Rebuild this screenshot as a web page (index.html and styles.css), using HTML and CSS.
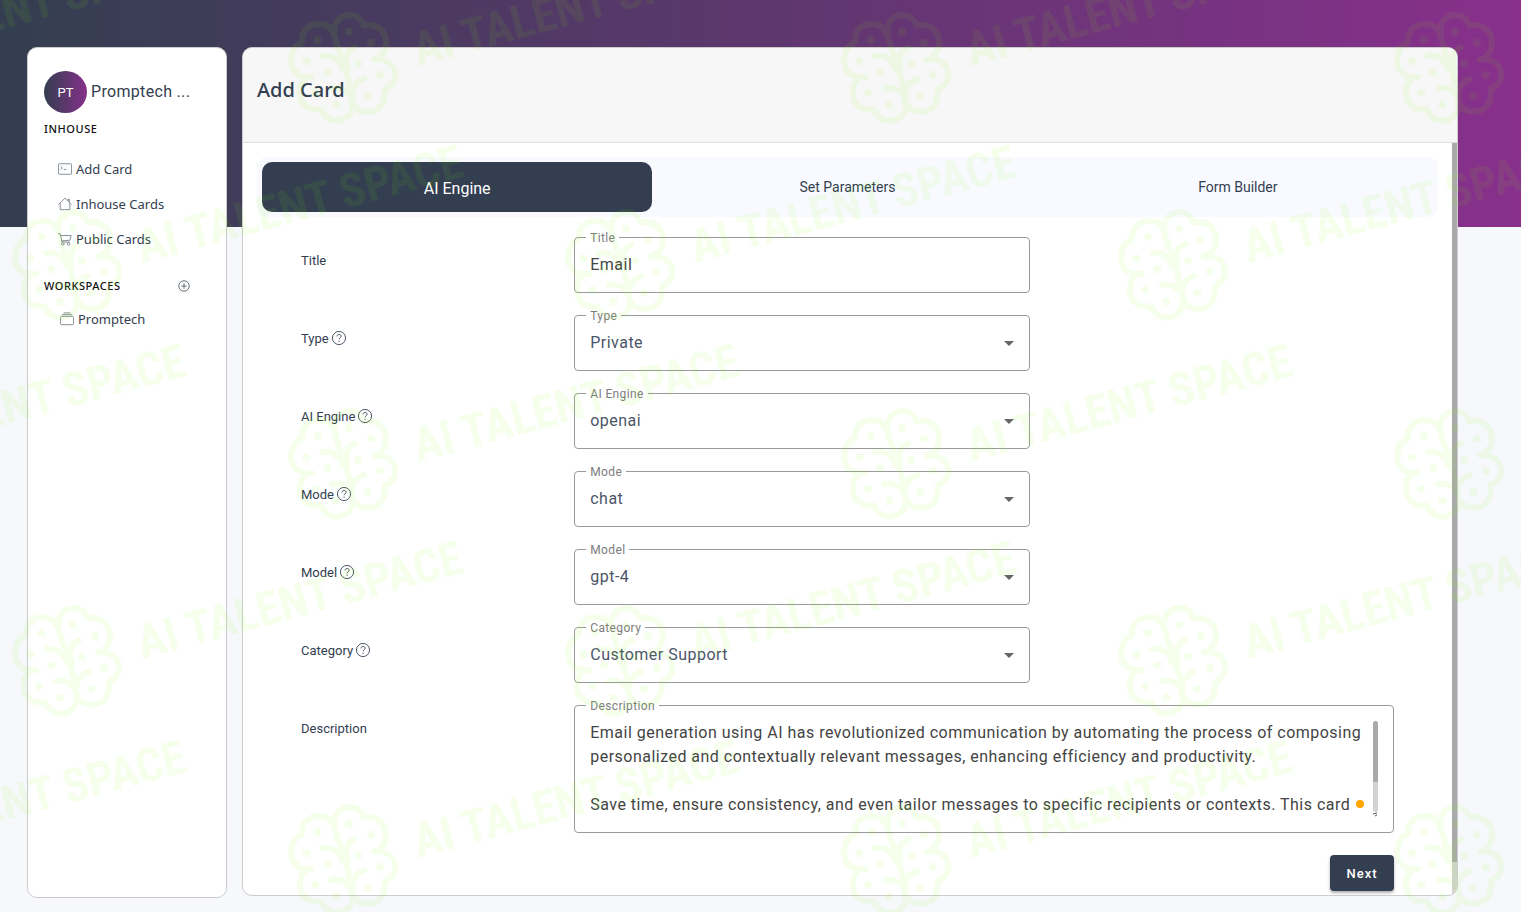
FILE: index.html
```html
<!DOCTYPE html>
<html lang="en">
<head>
  <meta charset="UTF-8">
  <meta name="viewport" content="width=device-width, initial-scale=1">
  <title>Add Card</title>
  <link rel="stylesheet" href="styles.css">
</head>
<body>

  <div class="page">

    <aside class="sidebar">
      <div class="account">
        <span class="avatar">PT</span>
        <span class="account-name">Promptech ...</span>
      </div>

      <h2 class="menu-title">INHOUSE</h2>
      <nav class="menu">
        <a href="#">
          <svg class="icon" viewBox="0 0 16 16"><path d="M1.5 2h13a1 1 0 0 1 1 1v10a1 1 0 0 1-1 1h-13a1 1 0 0 1-1-1V3a1 1 0 0 1 1-1z"/><path d="M3 5l2 1.700L3 8.400M6.500 8.500h3"/></svg>
          Add Card
        </a>
        <a href="#">
          <svg class="icon" viewBox="0 0 16 16"><path d="M.7 8.500L8 1.300l7.300 7.200M2.500 7v7.500h11V7M11.500 4.500v-2h1.500v3.500"/></svg>
          Inhouse Cards
        </a>
        <a href="#">
          <svg class="icon" viewBox="0 0 16 16"><path d="M0 2h2.500l2 9.500h9M3 4h12l-1.500 5.500-9.300.5"/><circle cx="5.500" cy="13.500" r="1.500"/><circle cx="12" cy="13.500" r="1.500"/></svg>
          Public Cards
        </a>
      </nav>

      <div class="menu-head">
        <h2 class="menu-title">WORKSPACES</h2>
        <button class="add-btn" type="button" aria-label="Add workspace">
          <svg class="icon" viewBox="0 0 16 16"><circle cx="8" cy="8" r="7"/><path d="M8 4.500v7M4.500 8h7"/></svg>
        </button>
      </div>
      <nav class="menu workspaces">
        <a href="#">
          <svg class="icon" viewBox="0 0 16 16"><rect x=".5" y="5" width="15" height="9.500" rx="1.500"/><path d="M2 3h12M4 1h8"/></svg>
          Promptech
        </a>
      </nav>
    </aside>

    <main class="card">
      <header class="card-header">
        <h1>Add Card</h1>
      </header>

      <div class="card-body">
        <div class="tabs">
          <button class="tab active" type="button">AI Engine</button>
          <button class="tab" type="button">Set Parameters</button>
          <button class="tab" type="button">Form Builder</button>
        </div>

        <form class="form">
          <div class="row">
            <label class="row-label" for="title">Title</label>
            <div class="field">
              <label for="title">Title</label>
              <input type="text" id="title" value="Email">
            </div>
          </div>

          <div class="row">
            <label class="row-label" for="type">Type <svg class="help" viewBox="0 0 16 16"><use href="#help"/></svg></label>
            <div class="field select">
              <label for="type">Type</label>
              <select id="type"><option>Private</option></select>
            </div>
          </div>

          <div class="row">
            <label class="row-label" for="engine">AI Engine <svg class="help" viewBox="0 0 16 16"><use href="#help"/></svg></label>
            <div class="field select">
              <label for="engine">AI Engine</label>
              <select id="engine"><option>openai</option></select>
            </div>
          </div>

          <div class="row">
            <label class="row-label" for="mode">Mode <svg class="help" viewBox="0 0 16 16"><use href="#help"/></svg></label>
            <div class="field select">
              <label for="mode">Mode</label>
              <select id="mode"><option>chat</option></select>
            </div>
          </div>

          <div class="row">
            <label class="row-label" for="model">Model <svg class="help" viewBox="0 0 16 16"><use href="#help"/></svg></label>
            <div class="field select">
              <label for="model">Model</label>
              <select id="model"><option>gpt-4</option></select>
            </div>
          </div>

          <div class="row">
            <label class="row-label" for="category">Category <svg class="help" viewBox="0 0 16 16"><use href="#help"/></svg></label>
            <div class="field select">
              <label for="category">Category</label>
              <select id="category"><option>Customer Support</option></select>
            </div>
          </div>

          <div class="row">
            <label class="row-label" for="description">Description</label>
            <div class="field wide">
              <label for="description">Description</label>
              <textarea id="description" rows="4">Email generation using AI has revolutionized communication by automating the process of composing personalized and contextually relevant messages, enhancing efficiency and productivity.

Save time, ensure consistency, and even tailor messages to specific recipients or contexts. This card</textarea>
              <span class="status-dot"></span>
              <span class="text-scroll"></span>
              <svg class="resizer" viewBox="0 0 5 5"><path d="M0 2l4-1M2 4l2-1"/></svg>
            </div>
          </div>

          <div class="actions">
            <button class="next-btn" type="button">Next</button>
          </div>
        </form>
      </div>
      <div class="card-scroll"></div>
    </main>

  </div>

  <!-- watermark over the whole page -->
  <svg class="watermark" aria-hidden="true">
    <defs>
      <symbol id="help" viewBox="0 0 16 16">
        <circle cx="8" cy="8" r="7.500"/>
        <path d="M5.700 6.200c0-3 4.700-3 4.700-.2 0 1.700-2.300 1.700-2.300 3.500M8.100 11v1.400"/>
      </symbol>
      <g id="mark">
        <g class="brain" transform="scale(.3333) translate(-217 -197)">
          <path d="M239 255C225 190 205 150 191 100C184 72 165 64 141 65C112 66 92 88 94 119C72 130 61 150 61 177C62 205 84 224 107 224H124M105 228C82 248 82 290 103 309C115 320 130 323 150 321C160 342 178 355 198 355C226 354 247 334 247 307C247 278 225 256 198 256Q190 255 183 258"/>
          <path d="M154 161C184 156 207 172 216 201M191 100C187 65 203 39 237 38C256 38 271 50 279 69C316 62 346 84 346 121C346 148 330 166 310 171C345 168 373 185 374 217C374 237 362 251 343 260C344 300 331 328 291 328C268 328 253 316 246 300"/>
          <path d="M253 135C229 143 222 168 231 198M280 230C257 237 242 255 242 290"/>
          <g class="dots">
            <circle cx="141" cy="113" r="12"/><circle cx="235" cy="88" r="12"/><circle cx="301" cy="121" r="12"/>
            <circle cx="107" cy="177" r="12"/><circle cx="262" cy="184" r="12"/><circle cx="170" cy="210" r="12"/>
            <circle cx="328" cy="217" r="12"/><circle cx="134" cy="272" r="12"/><circle cx="290" cy="281" r="12"/>
            <circle cx="197" cy="307" r="12"/>
          </g>
        </g>
        <text transform="translate(75 -2) rotate(-15)">AI TALENT SPACE</text>
      </g>
      <pattern id="marks" width="553" height="396" patternUnits="userSpaceOnUse">
        <use href="#mark" x="67" y="265"/>
        <use href="#mark" x="343" y="68"/>
        <use href="#mark" x="-210" y="68"/>
        <use href="#mark" x="343" y="464"/>
        <use href="#mark" x="-210" y="464"/>
      </pattern>
    </defs>
    <rect width="100%" height="100%" fill="url(#marks)"/>
  </svg>

</body>
</html>
```
FILE: styles.css
```css
* {
  box-sizing: border-box;
}

body {
  margin: 0;
  min-height: 100vh;
  position: relative;
  overflow: hidden;
  font-family: Roboto, "Liberation Sans", sans-serif;
  color: #333e50;
  background: linear-gradient(90deg, #333e50, #88308c) 0 0 / 100% 227px no-repeat #f7f8fb;
}

h1, h2 {
  margin: 0;
}

button, input, select, textarea {
  font-family: inherit;
  color: inherit;
  border: 0;
  background: none;
}

.page {
  display: flex;
  align-items: flex-start;
  gap: 15px;
  min-height: 100vh;
  padding: 47px 63px 14px 27px;
}

/* sidebar */
.sidebar {
  flex: 0 0 200px;
  align-self: stretch;
  padding: 23px 16px;
  background: white;
  border: 1px solid #ccc;
  border-radius: 10px;
  font-family: "Noto Sans", sans-serif;
}

.account {
  display: flex;
  align-items: center;
  gap: 4px;
  font-family: Roboto, sans-serif;
}

.avatar {
  width: 43px;
  height: 42px;
  line-height: 44px;
  border-radius: 50%;
  background: linear-gradient(90deg, #333e50, #86308a);
  color: white;
  font-size: 13px;
  text-align: center;
}

.account-name {
  padding-bottom: 2px;
  font-size: 16px;
  letter-spacing: .02em;
}

.menu-title {
  font-size: 11px;
  line-height: 16px;
  font-weight: 500;
  letter-spacing: .05em;
  color: #111;
}

.account + .menu-title {
  margin-top: 8px;
}

.menu {
  display: flex;
  flex-direction: column;
  gap: 15px;
  padding: 22px 0 0 14px;
}

.menu a {
  display: flex;
  align-items: center;
  gap: 4px;
  height: 20px;
  font-size: 13px;
  color: #333e50;
  text-decoration: none;
}

.menu.workspaces {
  padding: 15px 0 0 16px;
}

.menu-head {
  display: flex;
  align-items: center;
  justify-content: space-between;
  margin-top: 29px;
  padding-right: 20px;
}

.icon {
  display: block;
  width: 14px;
  height: 14px;
  fill: none;
  stroke: #77808c;
}

.add-btn {
  padding: 0;
}

.add-btn .icon {
  width: 12px;
  height: 12px;
  stroke: #333e50;
}

/* main card */
.card {
  flex: 1;
  position: relative;
  min-width: 0;
  background: white;
  border: 1px solid #ccc;
  border-radius: 10px;
  overflow: hidden;
}

.card-header {
  height: 95px;
  padding: 28px 14px;
  background: #f7f7f7;
  border-bottom: 1px solid #ddd;
}

.card-header h1 {
  font-family: "Noto Sans", sans-serif;
  font-size: 20px;
  line-height: 28px;
  font-weight: 500;
}

.card-body {
  padding: 14px 19px 4px 14px;
}

.card-scroll {
  position: absolute;
  top: 95px;
  right: 0;
  bottom: 0;
  width: 5px;
  background: linear-gradient(#aaa, #aaa) 0 0 / 100% 719px no-repeat #d2d2d2;
}

.tabs {
  display: flex;
  padding: 5px;
  background: #f8faff;
  border-radius: 10px;
}

.tab {
  flex: 1;
  height: 50px;
  border-radius: 10px;
  font-size: 14px;
}

.tab.active {
  padding-top: 3px;
  background: #333e50;
  color: white;
  font-size: 16px;
}

/* form */
.form {
  padding: 20px 44px 0;
}

.row {
  display: grid;
  grid-template-columns: 3fr 5fr 4fr;
  margin-bottom: 22px;
}

.row-label {
  display: flex;
  align-items: center;
  align-self: start;
  gap: 3px;
  height: 16px;
  margin-top: 15px;
  font-size: 13px;
}

.help {
  width: 14px;
  height: 14px;
  fill: none;
  stroke: #333e50;
}

.field {
  position: relative;
  height: 56px;
  border: 1px solid #9a9a9a;
  border-radius: 4px;
}

.field.wide {
  grid-column: span 2;
  height: 128px;
}

.field label {
  position: absolute;
  top: -7px;
  left: 11px;
  padding: 0 4px;
  background: white;
  color: #7d7d7d;
  font-size: 12px;
  line-height: 14px;
  letter-spacing: .03em;
}

.field input, .field select, .field textarea {
  display: block;
  width: 100%;
  height: 54px;
  padding: 0 15px;
  appearance: none;
  outline: 0;
  font-size: 16px;
  line-height: 24px;
  letter-spacing: .03em;
}

.field input, .field textarea {
  color: #444;
}

.field input {
  padding-bottom: 2px;
}

.field select {
  color: #4c5568;
}

.field textarea {
  height: 113px;
  padding: 15px 20px 0 15px;
  overflow: hidden;
  resize: none;
}

.select::after {
  content: "";
  position: absolute;
  top: 25px;
  right: 15px;
  border: 5px solid transparent;
  border-top-color: #666;
  border-bottom: 0;
}

.status-dot {
  position: absolute;
  right: 29px;
  bottom: 24px;
  width: 8px;
  height: 8px;
  border-radius: 50%;
  background: orange;
}

.text-scroll {
  position: absolute;
  top: 15px;
  right: 15px;
  width: 5px;
  height: 91px;
  border-radius: 3px;
  background: linear-gradient(#aaa, #aaa) 0 0 / 100% 61px no-repeat #d2d2d2;
}

.resizer {
  position: absolute;
  right: 15px;
  bottom: 15px;
  width: 5px;
  height: 5px;
  fill: none;
  stroke: #555;
}

.actions {
  display: flex;
  justify-content: flex-end;
}

.next-btn {
  width: 64px;
  height: 36px;
  border-radius: 4px;
  background: #333e50;
  color: white;
  font-size: 13px;
  font-weight: 500;
  letter-spacing: .08em;
  box-shadow: 0 2px 3px #00000050;
}

/* watermark */
.watermark {
  position: absolute;
  inset: 0;
  width: 100%;
  height: 100%;
  opacity: .07;
  pointer-events: none;
}

.watermark text {
  font-family: "Roboto Condensed", Roboto, sans-serif;
  font-size: 47px;
  font-weight: 700;
  fill: #7fff00;
}

.brain {
  fill: none;
  stroke: #7fff00;
  stroke-width: 18px;
  stroke-linecap: round;
  stroke-linejoin: round;
}

.dots {
  fill: #7fff00;
  stroke: none;
}
```
